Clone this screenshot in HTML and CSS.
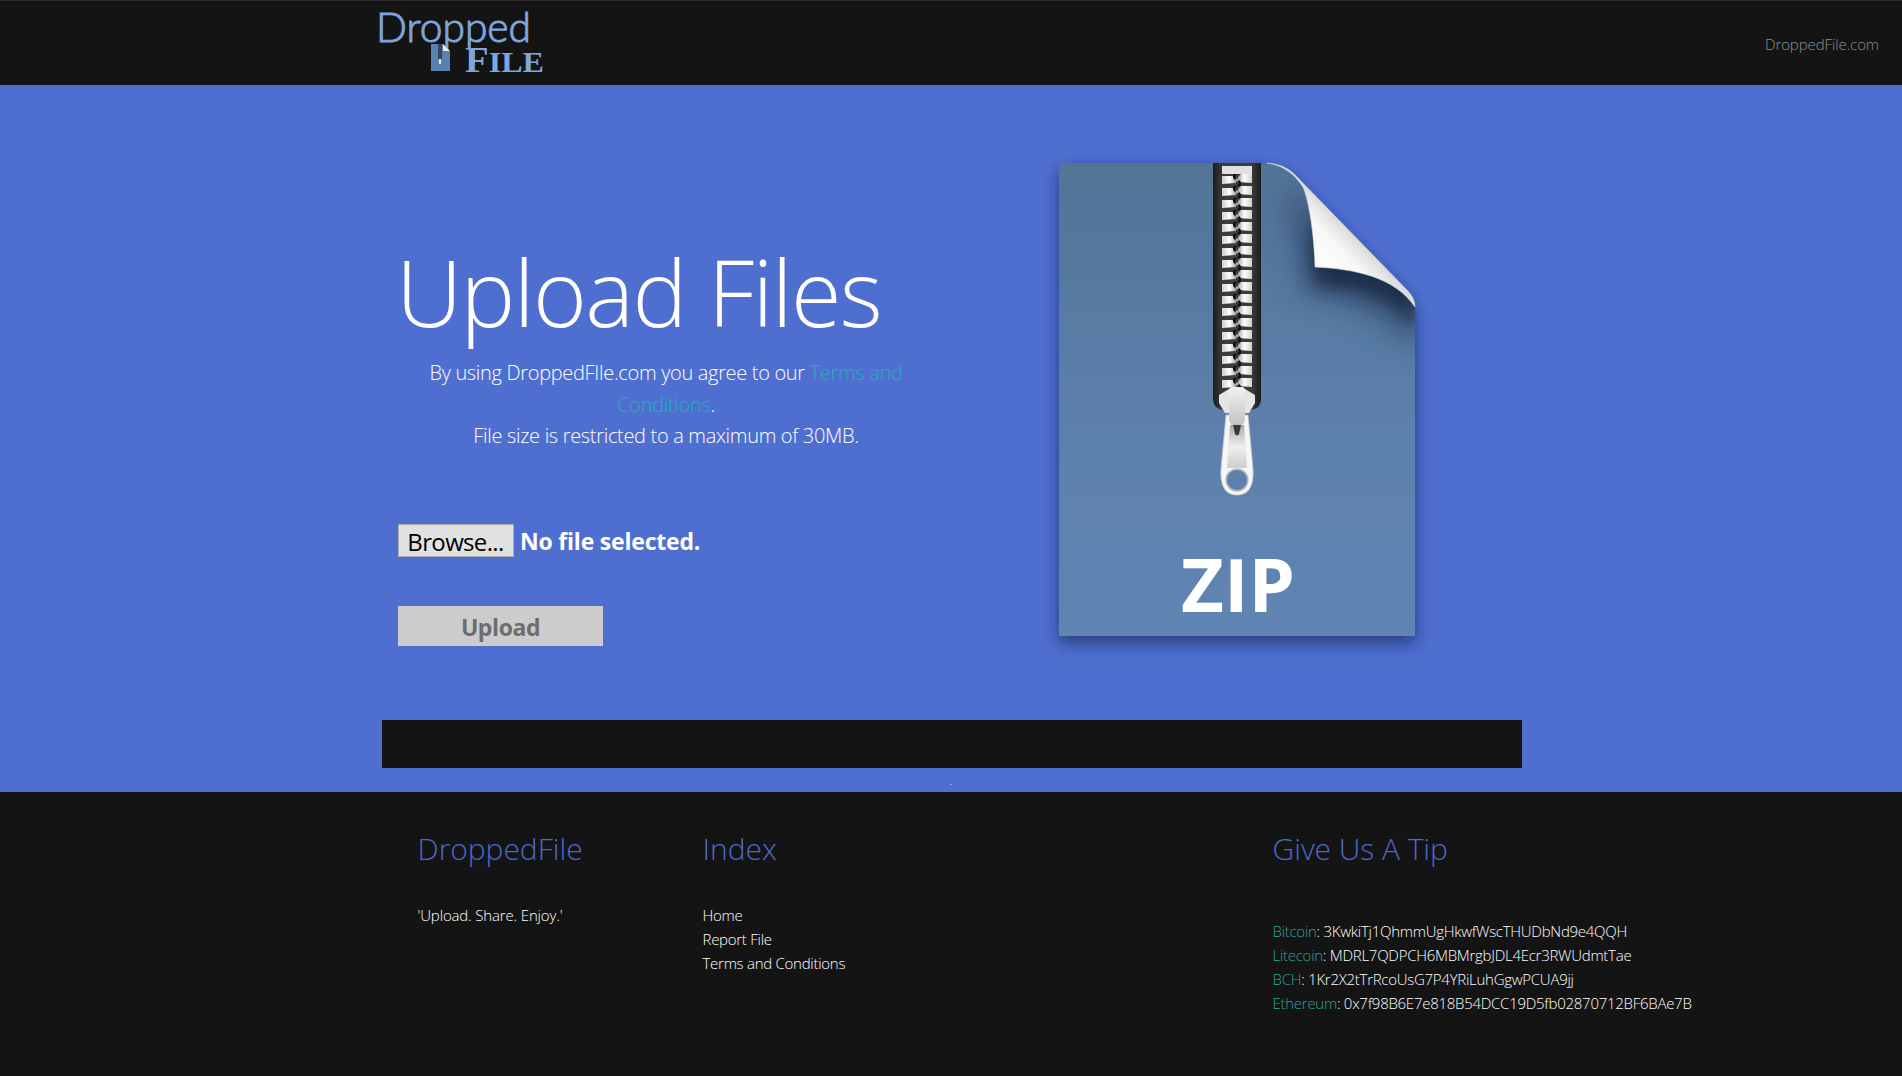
FILE: index.html
```html
<!DOCTYPE html>
<html lang="en">
<head>
<meta charset="utf-8">
<title>DroppedFile</title>
<link rel="stylesheet" href="styles.css">
</head>
<body>
<header class="topbar">
  <a class="logo" href="#">
    <svg width="180" height="84" viewBox="0 0 180 84">
      <text class="logo-dropped" x="0" y="41" textLength="155" lengthAdjust="spacingAndGlyphs">Dropped</text>
      <g transform="translate(55 43)">
        <path d="M0 0H12L19 7V27H0Z" fill="#5a80ad"/>
        <path d="M12 0L19 7H12Z" fill="#e8e8e8"/>
        <rect x="7" y="0" width="4" height="15" fill="#33475f"/>
        <rect x="8" y="15" width="2" height="5" fill="#dfe6ee"/>
      </g>
      <text class="logo-file" x="89" y="71" textLength="79" lengthAdjust="spacingAndGlyphs"><tspan class="logo-cap">F</tspan>ILE</text>
    </svg>
  </a>
  <a class="site-link" href="#">DroppedFile.com</a>
</header>

<main class="hero">
  <div class="container hero-row">
    <section class="upload-col">
      <h1 class="title">Upload Files</h1>
      <p class="terms">By using DroppedFIle.com you agree to our <a class="teal-link" href="#">Terms and Conditions</a>.<br>File size is restricted to a maximum of 30MB.</p>
      <div class="file-row">
        <button class="browse" type="button">Browse...</button>
        <span class="no-file">No file selected.</span>
      </div>
      <button class="upload" type="button" disabled>Upload</button>
    </section>
    <section class="art-col">
      <svg class="zip-art" width="396" height="513" viewBox="-20 -10 396 513">
        <defs>
          <linearGradient id="page" x1="0" y1="0" x2="0" y2="1">
            <stop offset="0" stop-color="#527397"/>
            <stop offset="0.55" stop-color="#5c80ab"/>
            <stop offset="1" stop-color="#6185b3"/>
          </linearGradient>
          <linearGradient id="flap" gradientUnits="userSpaceOnUse" x1="245" y1="112" x2="298" y2="62">
            <stop offset="0" stop-color="#ffffff"/>
            <stop offset="0.6" stop-color="#f8f8f8"/>
            <stop offset="0.88" stop-color="#dadada"/>
            <stop offset="1" stop-color="#bcbcbc"/>
          </linearGradient>
          <linearGradient id="tape" x1="0" y1="0" x2="1" y2="0">
            <stop offset="0" stop-color="#1c1c1c"/>
            <stop offset="0.2" stop-color="#3c3c3c"/>
            <stop offset="0.8" stop-color="#3c3c3c"/>
            <stop offset="1" stop-color="#1c1c1c"/>
          </linearGradient>
          <linearGradient id="toothL" x1="0" y1="0" x2="1" y2="0">
            <stop offset="0" stop-color="#cfcfcf"/>
            <stop offset="0.55" stop-color="#ffffff"/>
            <stop offset="1" stop-color="#a5a5a5"/>
          </linearGradient>
          <linearGradient id="toothR" x1="0" y1="0" x2="1" y2="0">
            <stop offset="0" stop-color="#a5a5a5"/>
            <stop offset="0.45" stop-color="#ffffff"/>
            <stop offset="1" stop-color="#cfcfcf"/>
          </linearGradient>
          <linearGradient id="metal" x1="0" y1="0" x2="0" y2="1">
            <stop offset="0" stop-color="#a9a9a9"/>
            <stop offset="0.5" stop-color="#efefef"/>
            <stop offset="1" stop-color="#cdcdcd"/>
          </linearGradient>
          <linearGradient id="metalTop" x1="0" y1="0" x2="0" y2="1">
            <stop offset="0" stop-color="#f2f2f2"/>
            <stop offset="1" stop-color="#c2c2c2"/>
          </linearGradient>
          <pattern id="teeth" x="163" y="11" width="30" height="12" patternUnits="userSpaceOnUse">
            <path d="M0 2H11L14 4V9L0 10Z" fill="url(#toothL)"/>
            <path d="M30 0H19L16 3V8L30 9Z" fill="url(#toothR)"/>
            <path d="M15 -1C11 1 11 4 15 6C19 8 19 11 15 13" fill="none" stroke="#0a0a0a" stroke-width="2.1"/>
            <circle cx="15" cy="6" r="1.8" fill="#a8a8a8"/>
          </pattern>
          <filter id="blur14" x="-50%" y="-50%" width="200%" height="200%"><feGaussianBlur stdDeviation="14"/></filter>
          <filter id="blur7" x="-50%" y="-50%" width="200%" height="200%"><feGaussianBlur stdDeviation="9"/></filter>
          <filter id="blur5" x="-40%" y="-40%" width="180%" height="180%"><feGaussianBlur stdDeviation="5"/></filter>
          <filter id="outer" x="-15%" y="-10%" width="130%" height="125%">
            <feDropShadow dx="0" dy="7" stdDeviation="8" flood-color="#16234f" flood-opacity="0.65"/>
          </filter>
          <clipPath id="pageClip"><path d="M0 0H208C222 1 231 6 238 14L348 127Q356 135 356 144V473H0Z"/></clipPath>
        </defs>
        <path d="M0 0H208C222 1 231 6 238 14L348 127Q356 135 356 144V473H0Z" fill="url(#page)" filter="url(#outer)"/>
        <g clip-path="url(#pageClip)">
          <path d="M222 30C232 60 236 100 242 130C290 140 330 165 360 190L360 100L250 30Z" fill="#2f4566" opacity="0.5" filter="url(#blur14)"/>
          <path d="M250 60C252 85 252 110 256 124C295 124 335 135 358 168L358 110Z" fill="#1f2f4a" filter="url(#blur7)"/>
        </g>
        <path d="M208 0C225 2 236 12 244 24C250 38 255 70 256 104C296 106 336 114 356 144Q356 135 348 127L238 14C231 6 222 1 208 0Z" fill="url(#flap)" stroke="#c9d6e6" stroke-width="0.6"/>
        <path d="M154 0H202V235Q202 247 190 247H166Q154 247 154 235Z" fill="url(#tape)"/>
        <rect x="163" y="3" width="30" height="8" fill="#e0e0e0"/>
        <rect x="163" y="11" width="30" height="216" fill="url(#teeth)"/>
        <path d="M172 290C170 268 172 255 178 255S186 268 184 290Z" fill="#3d5a80" opacity="0.6" filter="url(#blur5)"/>
        <path d="M160 232L170 226H186L196 232V240L190 250H166L160 240Z" fill="#e4e4e4"/>
        <path d="M167 252H189L194 306C195 324 189 332 178 332S161 324 162 306Z" fill="#f6f6f6" stroke="#c9c9c9" stroke-width="0.8"/>
        <path d="M171 262H185L188 305H168Z" fill="url(#metal)"/>
        <path d="M173 224H183Q186 224 186 228V258L183 262H173L170 258V228Q170 224 173 224Z" fill="url(#metalTop)"/>
        <path d="M174 262H182L180 271Q178 274 176 271Z" fill="#3a3a3a"/>
        <circle cx="178" cy="317" r="11.5" fill="#b0b0b0"/>
        <circle cx="178" cy="317" r="10" fill="#5d81ad"/>
        <text class="zip-label" x="179" y="449" text-anchor="middle">ZIP</text>
      </svg>
    </section>
  </div>
  <div class="container"><div class="ad-bar"></div></div>
  <div class="dot">.</div>
</main>

<footer class="footer">
  <div class="container footer-grid">
    <div class="footer-col">
      <h2 class="footer-title">DroppedFile</h2>
      <p class="footer-text">'Upload. Share. Enjoy.'</p>
    </div>
    <div class="footer-col">
      <h2 class="footer-title">Index</h2>
      <ul class="footer-links">
        <li><a href="#">Home</a></li>
        <li><a href="#">Report File</a></li>
        <li><a href="#">Terms and Conditions</a></li>
      </ul>
    </div>
    <div class="footer-col"></div>
    <div class="footer-col">
      <h2 class="footer-title">Give Us A Tip</h2>
      <ul class="footer-links tips">
        <li><span class="coin">Bitcoin</span>: 3KwkiTj1QhmmUgHkwfWscTHUDbNd9e4QQH</li>
        <li><span class="coin">Litecoin</span>: MDRL7QDPCH6MBMrgbJDL4Ecr3RWUdmtTae</li>
        <li><span class="coin">BCH</span>: 1Kr2X2tTrRcoUsG7P4YRiLuhGgwPCUA9jj</li>
        <li><span class="coin">Ethereum</span>: 0x7f98B6E7e818B54DCC19D5fb02870712BF6BAe7B</li>
      </ul>
    </div>
  </div>
</footer>
</body>
</html>
```

FILE: styles.css
```css
* { box-sizing: border-box; }
html, body { margin: 0; height: 100%; }
body {
  font-family: "Open Sans", "Noto Sans", sans-serif;
  font-weight: 300;
  background: #141414;
  color: #fff;
  overflow: hidden;
}
a { color: inherit; text-decoration: none; }

.container { width: 1140px; margin-left: 382px; }

.topbar {
  height: 85px;
  background: #141414;
  border-top: 1px solid #2c2c2c;
  display: flex;
  align-items: center;
  justify-content: space-between;
  padding: 0 23px 0 376px;
}
.logo { display: block; height: 84px; }
.logo-dropped {
  font-family: "Lato", sans-serif;
  font-weight: 300;
  font-size: 41px;
  fill: #7fa5dd;
  stroke: #7fa5dd;
  stroke-width: 1px;
}
.logo-file {
  font-family: "Liberation Serif", serif;
  font-weight: 700;
  font-size: 29px;
  fill: #7fa5dd;
}
.logo-cap { font-size: 35px; }
.site-link { font-size: 15px; color: #8f8f8f; letter-spacing: -0.1px; padding-top: 2px; }

.hero {
  height: 707px;
  background: #4f6fd0;
  display: flex;
  flex-direction: column;
}
.hero-row { display: flex; height: 635px; }
.upload-col { width: 570px; padding: 146px 0 0 14px; }
.title {
  margin: 0;
  font-size: 92px;
  font-weight: 300;
  line-height: 122px;
  letter-spacing: -1.6px;
  white-space: nowrap;
}
.terms {
  width: 536px;
  margin: 4px 0 0 2px;
  font-size: 20px;
  line-height: 31.5px;
  text-align: center;
  letter-spacing: -0.32px;
}
.teal-link { color: #22b0b8; }
.file-row { display: flex; align-items: center; gap: 6px; margin: 72px 0 0 2px; }
.browse {
  width: 116px;
  height: 33px;
  padding: 0 1px 0 0;
  background: #e1e1e1;
  border: 1px solid #adadad;
  font: 400 24px "Open Sans", sans-serif;
  letter-spacing: -0.65px;
  color: #000;
}
.no-file { font-size: 23px; font-weight: 700; letter-spacing: -0.2px; padding-top: 1px; }
.upload {
  display: block;
  width: 205px;
  height: 40px;
  margin: 49px 0 0 2px;
  padding: 2px 0 0;
  background: #cccccc;
  border: 0;
  font: 700 23px "Open Sans", sans-serif;
  letter-spacing: -0.4px;
  color: #6d6d6d;
}
.art-col { padding: 68px 0 0 87px; }
.zip-art { display: block; }
.zip-label {
  font-family: "Open Sans", sans-serif;
  font-weight: 700;
  font-size: 74px;
  fill: #fff;
}
.ad-bar { height: 48px; background: #141414; }
.dot { text-align: center; font-size: 10px; line-height: 27px; height: 24px; color: #fff; }

.footer { height: 284px; background: #141414; }
.footer-grid { display: grid; grid-template-columns: repeat(4, 285px); }
.footer-col { padding: 37px 0 0 35.5px; white-space: nowrap; }
.footer-title {
  margin: 0;
  font-size: 30px;
  font-weight: 300;
  line-height: 40px;
  color: #4a69c8;
  letter-spacing: -0.05px;
}
.footer-text { margin: 34px 0 0; font-size: 15px; line-height: 24px; letter-spacing: -0.15px; }
.footer-links { list-style: none; margin: 34px 0 0; padding: 0; font-size: 15px; line-height: 24px; letter-spacing: -0.27px; }
.tips { margin-top: 50px; }
.coin { color: #2fa398; }
```
